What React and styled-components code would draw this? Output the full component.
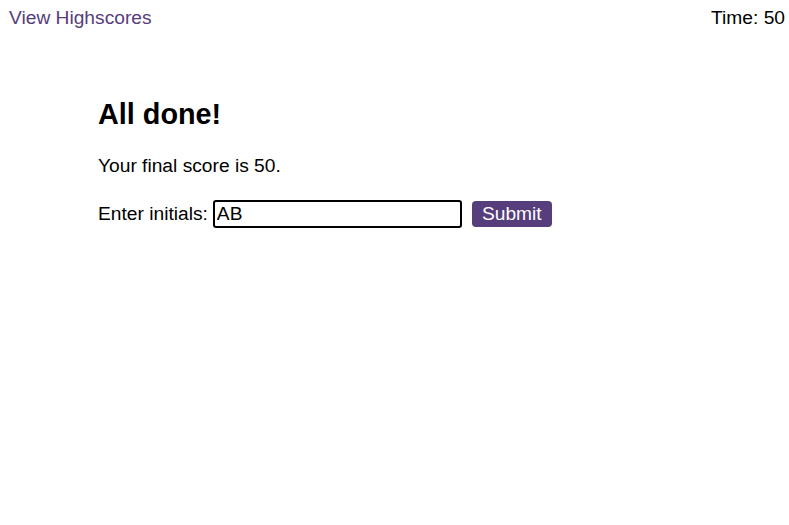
import React, { useState } from "react";
import styled, { createGlobalStyle } from "styled-components";

const GlobalStyle = createGlobalStyle`
  body {
    margin: 0;
    background: #fff;
    font-family: "Liberation Sans", Arial, sans-serif;
    font-size: 19.2px;
    color: #000;
  }
`;

const Header = styled.header`
  display: flex;
  justify-content: space-between;
  align-items: flex-start;
  padding: 7px 4px 0 9px;
`;

const HighscoreLink = styled.a`
  color: #563d7c;
  text-decoration: none;
  cursor: pointer;
`;

const Timer = styled.div`
  color: #000;
`;

const Main = styled.main`
  padding: 69px 0 0 98px;
`;

const Title = styled.h2`
  margin: 0 0 24px;
  font-size: 28.8px;
  font-weight: bold;
`;

const Score = styled.p`
  margin: 0 0 23px;
`;

const InitialsForm = styled.form`
  display: flex;
  align-items: center;
  gap: 10px;
`;

const Label = styled.label`
  display: flex;
  align-items: center;
  gap: 5px;
`;

const Input = styled.input`
  width: 249px;
  height: 28px;
  box-sizing: border-box;
  border: 2px solid #000;
  border-radius: 3px;
  padding: 0 2px;
  font-family: inherit;
  font-size: 19.2px;
  color: #000;
  caret-color: #000;
  outline: none;
`;

const SubmitButton = styled.button`
  width: 80px;
  height: 26px;
  border: none;
  border-radius: 4px;
  background: #563d7c;
  color: #fff;
  font-family: inherit;
  font-size: 19.2px;
  padding: 0;
  cursor: pointer;
`;

export default function App() {
  const [initials, setInitials] = useState("AB");

  const handleSubmit = (e) => {
    e.preventDefault();
  };

  return (
    <>
      <GlobalStyle />
      <Header>
        <HighscoreLink>View Highscores</HighscoreLink>
        <Timer>Time: 50</Timer>
      </Header>
      <Main>
        <Title>All done!</Title>
        <Score>Your final score is 50.</Score>
        <InitialsForm onSubmit={handleSubmit}>
          <Label>
            Enter initials:
            <Input autoFocus value={initials} onChange={(e) => setInitials(e.target.value)} />
          </Label>
          <SubmitButton type="submit">Submit</SubmitButton>
        </InitialsForm>
      </Main>
    </>
  );
}
